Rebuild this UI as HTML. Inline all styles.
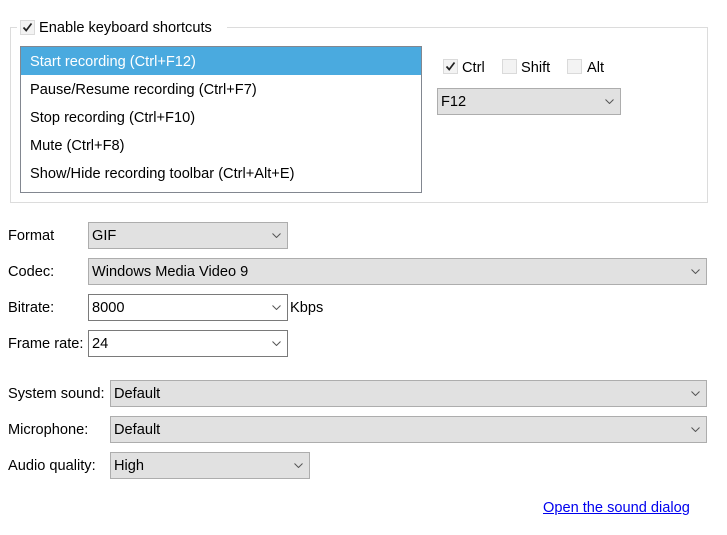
<!DOCTYPE html>
<html><head><style>
body{margin:0;width:727px;height:535px;background:#fff;font-family:"Liberation Sans",sans-serif;font-size:14.6px;color:#000;position:relative;overflow:hidden}
.a{position:absolute;white-space:nowrap}
.grp{position:absolute;left:10px;top:27px;width:696px;height:174px;border:1px solid #dcdcdc}
.cb{position:absolute;width:13px;height:13px;border:1px solid #dadada;background:#f3f3f3}
.cb svg{position:absolute;left:1px;top:1px}
.dd{position:absolute;height:25px;border:1px solid #adadad;background:#e1e1e1;box-sizing:content-box}
.dd.w{background:#fff;border-color:#7a7a7a}
.dd span{position:absolute;left:3px;top:5px}
.dd svg{position:absolute;right:6px;top:10px}
.lb{position:absolute;left:20px;top:46px;width:400px;height:145px;border:1px solid #828790}
.row{height:28px;line-height:31px;padding-left:9px}
.sel{background:#4aaadf;color:#fff}
</style></head><body>
<div class="grp"></div>
<div class="a" style="left:17px;top:17px;width:210px;height:20px;background:#fff"></div>
<div class="cb" style="left:20px;top:20px"><svg width="11" height="11"><path d="M1.5 5.5l2.7 3 5.3-7" stroke="#222" stroke-width="1.7" fill="none"/></svg></div>
<div class="a" style="left:39px;top:20px">Enable keyboard shortcuts</div>
<div class="lb">
<div class="row sel">Start recording (Ctrl+F12)</div>
<div class="row">Pause/Resume recording (Ctrl+F7)</div>
<div class="row">Stop recording (Ctrl+F10)</div>
<div class="row">Mute (Ctrl+F8)</div>
<div class="row">Show/Hide recording toolbar (Ctrl+Alt+E)</div>
</div>
<div class="cb" style="left:443px;top:59px"><svg width="11" height="11"><path d="M1.5 5.5l2.7 3 5.3-7" stroke="#222" stroke-width="1.7" fill="none"/></svg></div>
<div class="a" style="left:462px;top:60px">Ctrl</div>
<div class="cb" style="left:502px;top:59px"></div>
<div class="a" style="left:521px;top:60px">Shift</div>
<div class="cb" style="left:567px;top:59px"></div>
<div class="a" style="left:587px;top:60px">Alt</div>
<div class="dd" style="left:437px;top:88px;width:182px"><span>F12</span><svg width="9" height="5"><path d="M0.5 0.5l4 4 4-4" stroke="#555" fill="none"/></svg></div>

<div class="a" style="left:8px;top:228px">Format</div>
<div class="dd" style="left:88px;top:222px;width:198px"><span>GIF</span><svg width="9" height="5"><path d="M0.5 0.5l4 4 4-4" stroke="#555" fill="none"/></svg></div>
<div class="a" style="left:8px;top:264px">Codec:</div>
<div class="dd" style="left:88px;top:258px;width:617px"><span>Windows Media Video 9</span><svg width="9" height="5"><path d="M0.5 0.5l4 4 4-4" stroke="#555" fill="none"/></svg></div>
<div class="a" style="left:8px;top:300px">Bitrate:</div>
<div class="dd w" style="left:88px;top:294px;width:198px"><span>8000</span><svg width="9" height="5"><path d="M0.5 0.5l4 4 4-4" stroke="#555" fill="none"/></svg></div>
<div class="a" style="left:290px;top:300px">Kbps</div>
<div class="a" style="left:8px;top:336px">Frame rate:</div>
<div class="dd w" style="left:88px;top:330px;width:198px"><span>24</span><svg width="9" height="5"><path d="M0.5 0.5l4 4 4-4" stroke="#555" fill="none"/></svg></div>

<div class="a" style="left:8px;top:386px">System sound:</div>
<div class="dd" style="left:110px;top:380px;width:595px"><span>Default</span><svg width="9" height="5"><path d="M0.5 0.5l4 4 4-4" stroke="#555" fill="none"/></svg></div>
<div class="a" style="left:8px;top:422px">Microphone:</div>
<div class="dd" style="left:110px;top:416px;width:595px"><span>Default</span><svg width="9" height="5"><path d="M0.5 0.5l4 4 4-4" stroke="#555" fill="none"/></svg></div>
<div class="a" style="left:8px;top:458px">Audio quality:</div>
<div class="dd" style="left:110px;top:452px;width:198px"><span>High</span><svg width="9" height="5"><path d="M0.5 0.5l4 4 4-4" stroke="#555" fill="none"/></svg></div>
<div class="a" style="left:543px;top:500px;color:#0000ee;text-decoration:underline">Open the sound dialog</div>
</body></html>
